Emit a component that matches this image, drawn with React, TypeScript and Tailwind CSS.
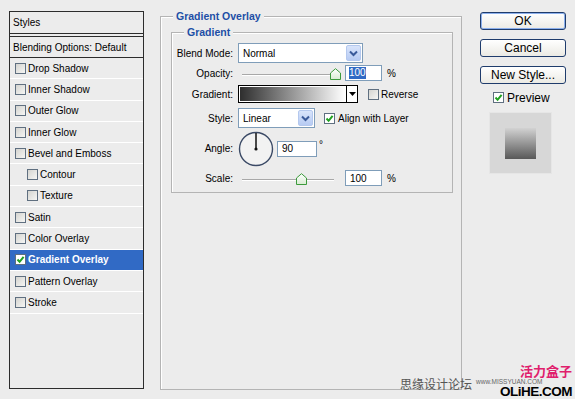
import React from "react";

const Check: React.FC<{ checked?: boolean; className?: string }> = ({
  checked,
  className = "",
}) => (
  <span
    className={`flex size-[11px] shrink-0 items-center justify-center border border-[#5f6f80] ${
      checked
        ? "bg-white"
        : "bg-[linear-gradient(135deg,#d4d4d0,#f6f6f4)]"
    } ${className}`}
  >
    {checked && (
      <svg width="9" height="9" viewBox="0 0 9 9">
        <path
          d="M1.5 4.5 L3.6 6.8 L7.6 1.8"
          fill="none"
          stroke="#21a121"
          strokeWidth="2"
        />
      </svg>
    )}
  </span>
);

const Arrow: React.FC = () => (
  <span className="flex h-[16px] w-[15px] items-center justify-center rounded-[2px] border border-[#b4c8ee] bg-[linear-gradient(#d8e4fb,#b7cbf3)]">
    <svg width="9" height="7" viewBox="0 0 9 7">
      <path d="M1 1.5 L4.5 5 L8 1.5" fill="none" stroke="#3a5a9a" strokeWidth="2" />
    </svg>
  </span>
);

const Thumb: React.FC = () => (
  <svg width="11" height="12" viewBox="0 0 11 12">
    <defs>
      <linearGradient id="tg" x1="0" y1="0" x2="0" y2="1">
        <stop offset="0" stopColor="#ffffff" />
        <stop offset="1" stopColor="#d8ecd2" />
      </linearGradient>
    </defs>
    <path d="M0.5 11.5 V5 L5.5 0.7 L10.5 5 V11.5 Z" fill="url(#tg)" stroke="#3c9a3c" />
  </svg>
);

const Slider: React.FC<{ pos: number }> = ({ pos }) => (
  <div className="relative h-[16px] w-[102px]">
    <div className="absolute left-[4px] right-[6px] top-[9px] h-[2px] border-t border-[#a8a8a8] bg-white" />
    <div className="absolute top-[3px]" style={{ left: pos }}>
      <Thumb />
    </div>
  </div>
);

const rows: { label: string; indent?: boolean; checked?: boolean; active?: boolean }[] = [
  { label: "Drop Shadow" },
  { label: "Inner Shadow" },
  { label: "Outer Glow" },
  { label: "Inner Glow" },
  { label: "Bevel and Emboss" },
  { label: "Contour", indent: true },
  { label: "Texture", indent: true },
  { label: "Satin" },
  { label: "Color Overlay" },
  { label: "Gradient Overlay", checked: true, active: true },
  { label: "Pattern Overlay" },
  { label: "Stroke" },
];

const Label: React.FC<{ children: React.ReactNode }> = ({ children }) => (
  <span className="w-[61px] shrink-0 text-right">{children}</span>
);

const App: React.FC = () => {
  return (
    <div className="relative flex h-[399px] w-[575px] overflow-hidden bg-[#ececec] font-['Liberation_Sans',Arial,sans-serif] text-[10px] text-black">
      {/* styles list */}
      <div className="ml-[9px] mt-[11px] flex h-[378px] w-[135px] flex-col border border-[#2c2c2c]">
        <div className="flex h-[22px] items-center border-b border-[#2c2c2c] pl-[3px]">Styles</div>
        <div className="mt-[2px] flex h-[22px] items-center border-y border-[#2c2c2c] pl-[3px]">
          Blending Options: Default
        </div>
        {rows.map((r) => (
          <div
            key={r.label}
            className={`flex h-[21.3px] items-center gap-[2px] border-b border-white ${
              r.indent ? "pl-[17px]" : "pl-[5px]"
            } ${r.active ? "bg-[#316ac5] font-bold text-white" : ""}`}
          >
            <Check checked={r.checked} />
            <span>{r.label}</span>
          </div>
        ))}
      </div>

      {/* options */}
      <fieldset className="ml-[16px] mt-[9px] h-[381px] w-[302px] border border-[#b4b4b4] shadow-[inset_1px_1px_0_#fff]">
        <legend className="ml-[12px] bg-[#ececec] px-[3px] text-[10.5px] font-bold leading-[14px] text-[#1d4fa6]">
          Gradient Overlay
        </legend>
        <fieldset className="ml-[10px] mt-[2px] h-[168px] w-[282px] border border-[#b4b4b4] shadow-[inset_1px_1px_0_#fff]">
          <legend className="ml-[12px] bg-[#ececec] px-[3px] text-[10.5px] font-bold leading-[14px] text-[#1d4fa6]">
            Gradient
          </legend>
          <div className="flex flex-col pt-[4px]">
            <div className="flex h-[20px] items-center gap-[5px]">
              <Label>Blend Mode:</Label>
              <div className="flex h-[20px] w-[125px] items-center justify-between border border-[#7f9db9] bg-white pl-[4px] pr-[1px]">
                <span>Normal</span>
                <Arrow />
              </div>
            </div>
            <div className="mt-[2px] flex h-[16px] items-center gap-[5px]">
              <Label>Opacity:</Label>
              <Slider pos={92} />
              <div className="flex h-[16px] w-[37px] items-center border border-[#7f9db9] bg-white pl-[3px]">
                <span className="bg-[#316ac5] leading-[12px] text-white">100</span>
              </div>
              <span>%</span>
            </div>
            <div className="mt-[4px] flex h-[18px] items-center gap-[5px]">
              <Label>Gradient:</Label>
              <div className="flex h-[18px] w-[120px] border border-black bg-white">
                <div className="m-[1px] flex-1 bg-[linear-gradient(90deg,#2e2e2e,#ffffff)]" />
                <div className="flex w-[11px] items-center justify-center border-l border-black">
                  <svg width="7" height="4" viewBox="0 0 7 4">
                    <path d="M0 0 H7 L3.5 4 Z" fill="#000" />
                  </svg>
                </div>
              </div>
              <div className="ml-[5px] flex items-center gap-[2px]">
                <Check />
                <span>Reverse</span>
              </div>
            </div>
            <div className="mt-[5px] flex h-[20px] items-center gap-[5px]">
              <Label>Style:</Label>
              <div className="flex h-[20px] w-[77px] items-center justify-between border border-[#7f9db9] bg-white pl-[4px] pr-[1px]">
                <span>Linear</span>
                <Arrow />
              </div>
              <div className="ml-[4px] flex items-center gap-[3px]">
                <Check checked />
                <span>Align with Layer</span>
              </div>
            </div>
            <div className="mt-[3px] flex h-[35px] items-center gap-[5px]">
              <Label>Angle:</Label>
              <svg width="36" height="36" viewBox="0 0 36 36">
                <circle cx="18" cy="18" r="16.5" fill="#f2f2f2" stroke="#3b4a66" strokeWidth="1.4" />
                <line x1="18" y1="18" x2="18" y2="2" stroke="#111" strokeWidth="1.5" />
                <circle cx="18" cy="18" r="1.6" fill="#111" />
              </svg>
              <div className="ml-[-2px] flex h-[16px] w-[40px] items-center border border-[#7f9db9] bg-white pl-[4px]">
                90
              </div>
              <span className="-ml-[3px] self-start pt-[6px]">°</span>
            </div>
            <div className="mt-[4px] flex h-[16px] items-center gap-[5px]">
              <Label>Scale:</Label>
              <Slider pos={58} />
              <div className="flex h-[16px] w-[37px] items-center border border-[#7f9db9] bg-white pl-[4px]">
                100
              </div>
              <span>%</span>
            </div>
          </div>
        </fieldset>
      </fieldset>

      {/* buttons */}
      <div className="ml-[18px] mt-[12px] flex w-[86px] flex-col text-[12px]">
        <div className="flex flex-col gap-[9px]">
          {["OK", "Cancel", "New Style..."].map((b, i) => (
            <button
              key={b}
              className={`flex h-[18px] items-center justify-center rounded-[3px] border border-[#1f3c6c] bg-[linear-gradient(#ffffff,#ebeae4)] leading-none ${
                i === 0 ? "shadow-[inset_0_0_0_1px_#8cb0ec]" : ""
              }`}
            >
              {b}
            </button>
          ))}
        </div>
        <div className="mt-[7px] flex h-[13px] items-center gap-[3px] pl-[13px]">
          <Check checked />
          <span>Preview</span>
        </div>
        <div className="ml-[9px] mt-[8px] flex h-[62px] w-[63px] items-center justify-center border border-[#e6e6e6] bg-[#d7d7d7]">
          <div className="size-[31px] bg-[linear-gradient(#d2d2d2,#585858)]" />
        </div>
      </div>

      {/* watermark */}
      <div className="absolute left-[400px] top-[377px] font-['Noto_Sans_CJK_SC',sans-serif] text-[12px] leading-[14px] text-[#555]">
        思缘设计论坛
      </div>
      <div className="absolute left-[476px] top-[378px] text-[6.5px] leading-[7px] text-[#666]">
        www.MISSYUAN.COM
      </div>
      <div className="absolute left-[520px] top-[364px] font-['Noto_Sans_CJK_SC',sans-serif] text-[13px] font-bold leading-[14px] text-[#e0206c]">
        活力盒子
      </div>
      <div className="absolute left-[500px] top-[385px] text-[13.5px] font-bold leading-[14px] tracking-[-0.5px] text-black">
        OLiHE.COM
      </div>
    </div>
  );
};

export default App;
